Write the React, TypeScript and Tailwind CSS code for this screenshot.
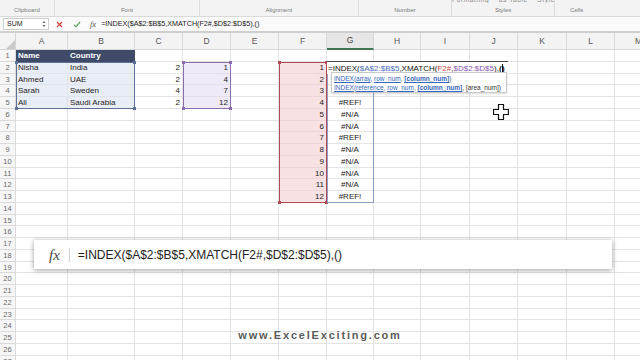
import React from 'react';

const cols = ['A', 'B', 'C', 'D', 'E', 'F', 'G', 'H', 'I', 'J', 'K', 'L', 'M'];

type Kind = 'hdr' | 'blue' | 'num' | 'purple' | 'pink' | 'err';
const data: Record<string, { t: string; k: Kind }> = {
  A1: { t: 'Name', k: 'hdr' },
  B1: { t: 'Country', k: 'hdr' },
  A2: { t: 'Nisha', k: 'blue' },
  B2: { t: 'India', k: 'blue' },
  A3: { t: 'Ahmed', k: 'blue' },
  B3: { t: 'UAE', k: 'blue' },
  A4: { t: 'Sarah', k: 'blue' },
  B4: { t: 'Sweden', k: 'blue' },
  A5: { t: 'Ali', k: 'blue' },
  B5: { t: 'Saudi Arabia', k: 'blue' },
  C2: { t: '2', k: 'num' },
  C3: { t: '2', k: 'num' },
  C4: { t: '4', k: 'num' },
  C5: { t: '2', k: 'num' },
  D2: { t: '1', k: 'purple' },
  D3: { t: '4', k: 'purple' },
  D4: { t: '7', k: 'purple' },
  D5: { t: '12', k: 'purple' },
};
for (let i = 1; i <= 12; i++) data['F' + (i + 1)] = { t: String(i), k: 'pink' };
const gVals = ['', '', '#N/A', '#REF!', '#N/A', '#N/A', '#REF!', '#N/A', '#N/A', '#N/A', '#N/A', '#REF!'];
gVals.forEach((v, i) => {
  if (v) data['G' + (i + 2)] = { t: v, k: 'err' };
});

function cellClass(k?: Kind) {
  const base =
    'h-[11.75px] border-r border-b text-[8px] leading-[11px] px-[2px] whitespace-nowrap overflow-visible text-[#1c1c1c]';
  switch (k) {
    case 'hdr':
      return base + ' bg-[#3e4a68] border-[#3e4a68] text-white font-bold';
    case 'blue':
      return base + ' bg-[#e9edf6] border-[#dfe3ec]';
    case 'purple':
      return base + ' bg-[#f0eaf6] border-[#e4dfea] text-right';
    case 'pink':
      return base + ' bg-[#f8e1e3] border-[#ecd6d8] text-right';
    case 'num':
      return base + ' border-[#e3e3e3] text-right';
    case 'err':
      return base + ' border-[#e3e3e3] text-center';
    default:
      return base + ' border-[#e3e3e3]';
  }
}

function Handles({ c }: { c: string }) {
  return (
    <>
      <div className={'absolute -left-[2px] -top-[2px] w-[3px] h-[3px] ' + c} />
      <div className={'absolute -right-[2px] -top-[2px] w-[3px] h-[3px] ' + c} />
      <div className={'absolute -left-[2px] -bottom-[2px] w-[3px] h-[3px] ' + c} />
      <div className={'absolute -right-[2px] -bottom-[2px] w-[3px] h-[3px] ' + c} />
    </>
  );
}

function Ribbon() {
  const label = 'text-[6px] text-[#7a7a7a] leading-[8px] text-center pb-[2px]';
  return (
    <div className="h-[17px] bg-[#f3f3f3] border-b border-[#dadada] flex overflow-hidden">
      <div className="w-[58px] border-r border-[#dcdcdc] flex flex-col justify-end">
        <div className={label}>Clipboard</div>
      </div>
      <div className="w-[154px] border-r border-[#dcdcdc] flex flex-col justify-end">
        <div className={label}>Font</div>
      </div>
      <div className="w-[168px] border-r border-[#dcdcdc] flex flex-col justify-end">
        <div className={label}>Alignment</div>
      </div>
      <div className="w-[99px] border-r border-[#dcdcdc] flex flex-col justify-end">
        <div className={label}>Number</div>
      </div>
      <div className="w-[103px] border-r border-[#dcdcdc] flex flex-col justify-between">
        <div className="h-[3px] overflow-hidden">
          <div className="-mt-[4px] text-[6.5px] leading-[7px] tracking-[0.6px] text-[#8a8a8a] text-center whitespace-nowrap">
            Formatting&nbsp;&nbsp;&nbsp;&nbsp;as Table&nbsp;&nbsp;&nbsp;&nbsp;Styles
          </div>
        </div>
        <div className={label}>Styles</div>
      </div>
      <div className="w-[90px] flex flex-col justify-end">
        <div className={label + ' pr-[42px]'}>Cells</div>
      </div>
    </div>
  );
}

function FormulaBar() {
  return (
    <div className="h-[14px] bg-[#fafafa] flex items-center">
      <div className="ml-[3px] w-[46px] h-[12px] bg-white border border-[#cdcdcd] flex items-center justify-between pl-[3px] pr-[2px]">
        <span className="text-[7px] leading-[8px] text-[#222]">SUM</span>
        <svg width="4" height="8" viewBox="0 0 4 8">
          <path d="M0.5 3 L2 1 L3.5 3 Z" fill="#666" />
          <path d="M0.5 5 L2 7 L3.5 5 Z" fill="#666" />
        </svg>
      </div>
      <div className="ml-[7px] w-[7px] h-[7px]">
        <svg width="7" height="7" viewBox="0 0 7 7">
          <path d="M1 1 L6 6 M6 1 L1 6" stroke="#d9413a" strokeWidth="1.2" />
        </svg>
      </div>
      <div className="ml-[10px] w-[8px] h-[7px]">
        <svg width="8" height="7" viewBox="0 0 8 7">
          <path d="M1 3.8 L3 5.8 L7 1" stroke="#58a55c" strokeWidth="1.2" fill="none" />
        </svg>
      </div>
      <span className="ml-[9px] text-[8.5px] leading-[10px] italic text-[#555] font-['Liberation_Serif',serif]">fx</span>
      <span className="ml-[5px] text-[7.2px] leading-[10px] text-[#222] whitespace-nowrap">
        =INDEX($A$2:$B$5,XMATCH(F2#,$D$2:$D$5),()
      </span>
    </div>
  );
}

function Grid() {
  const rows = Array.from({ length: 27 }, (_, i) => i + 1);
  return (
    <div className="relative">
      <div className="grid grid-cols-[16px_52px_67px_48px_48px_48px_48px_47px_47px_49px_48px_49px_48px_48px]">
        <div className="h-[17px] bg-[#f3f3f3] border-r border-b border-[#d6d6d6] flex items-end justify-end">
          <svg width="9" height="9" viewBox="0 0 9 9">
            <path d="M9 0 L9 9 L0 9 Z" fill="#c9c9c9" />
          </svg>
        </div>
        {cols.map((c) => (
          <div
            key={c}
            className={
              c === 'G'
                ? 'h-[17px] bg-[#e6e6e6] border-r border-[#d6d6d6] border-b-[2px] border-b-[#3d7550] flex items-center justify-center text-[8.5px] text-[#444]'
                : 'h-[17px] bg-[#f3f3f3] border-r border-b border-[#d9d9d9] flex items-center justify-center text-[8.5px] text-[#555]'
            }
          >
            {c}
          </div>
        ))}
        {rows.map((r) => (
          <React.Fragment key={r}>
            <div className="h-[11.75px] bg-[#f6f6f6] border-r border-b border-[#dadada] text-[7.5px] leading-[11px] text-center text-[#6a6a6a]">
              {r}
            </div>
            {cols.map((c) => {
              const d = data[c + r];
              return (
                <div key={c} className={cellClass(d?.k)}>
                  {d?.t}
                </div>
              );
            })}
          </React.Fragment>
        ))}
      </div>

      {/* Range highlights */}
      <div className="absolute left-[16px] top-[28.75px] w-[119px] h-[47px] border border-[#5e6f98]">
        <Handles c="bg-[#5e6f98]" />
      </div>
      <div className="absolute left-[183px] top-[28.75px] w-[48px] h-[47px] border border-[#8a6dab]">
        <Handles c="bg-[#8a6dab]" />
      </div>
      <div className="absolute left-[279px] top-[28.75px] w-[48px] h-[141px] border border-[#b04c57]">
        <Handles c="bg-[#b04c57]" />
      </div>
      <div className="absolute left-[327px] top-[28.75px] w-[47px] h-[141px] border border-[#8ea0c4]" />

      {/* Edit cell G2 */}
      <div className="absolute left-[327px] top-[28.25px] h-[12.5px] bg-white border-t border-[#4a4a4a] pl-[1px] pr-[3px] flex items-center whitespace-nowrap text-[8px] leading-[11px] text-[#111]">
        <span>=INDEX(</span>
        <span className="text-[#4a6fb8]">$A$2:$B$5</span>
        <span>,XMATCH(</span>
        <span className="text-[#c0413e]">F2#</span>
        <span>,</span>
        <span className="text-[#8a5aae]">$D$2:$D$5</span>
        <span>),</span>
        <span className="font-bold">(</span>
        <span className="inline-block w-[0.5px] h-[8px] bg-black" />
        <span className="font-bold">)</span>
      </div>

      {/* Tooltip */}
      <div className="absolute left-[331px] top-[39px] w-[176px] h-[21px] bg-white border border-[#c9c9c9] shadow-[0_1px_2px_rgba(0,0,0,0.15)] px-[2px] py-[1px] text-[6.5px] leading-[9px] whitespace-nowrap">
        <div className="text-[#3465b8]">
          <span className="underline">INDEX</span>(<span className="underline">array</span>,{' '}
          <span className="underline">row_num</span>,{' '}
          <span className="underline font-bold">[column_num]</span>)
        </div>
        <div className="text-[#3465b8]">
          <span className="underline">INDEX</span>(<span className="underline">reference</span>,{' '}
          <span className="underline">row_num</span>,{' '}
          <span className="underline font-bold">[column_num]</span>
          <span className="text-[#333]">, [area_num])</span>
        </div>
      </div>

      {/* Cursor */}
      <div className="absolute left-[493px] top-[71px]">
        <svg width="16" height="16" viewBox="0 0 16 16">
          <path
            d="M5.5 0.5 H10.5 V5.5 H15.5 V10.5 H10.5 V15.5 H5.5 V10.5 H0.5 V5.5 H5.5 Z"
            fill="#fff"
            stroke="#111"
            strokeWidth="1.2"
          />
        </svg>
      </div>
    </div>
  );
}

export default function App() {
  return (
    <div className="relative w-[640px] h-[360px] overflow-hidden bg-white font-['Liberation_Sans',Arial,sans-serif]">
      <Ribbon />
      <FormulaBar />
      <div className="h-[2px] bg-[#cfcfcf]" />
      <Grid />

      {/* Magnified formula bar */}
      <div className="absolute left-[34px] top-[240px] w-[578px] h-[29px] bg-white shadow-[0_1px_5px_rgba(0,0,0,0.4)] flex items-center">
        <span className="ml-[15px] text-[15px] leading-[18px] italic text-[#444] font-['Liberation_Serif',serif]">fx</span>
        <div className="ml-[9px] w-[1px] h-[14px] bg-[#d0d0d0]" />
        <span className="ml-[8px] text-[12px] leading-[16px] text-[#222] whitespace-nowrap">
          =INDEX($A$2:$B$5,XMATCH(F2#,$D$2:$D$5),()
        </span>
      </div>

      {/* Watermark */}
      <div className="absolute left-0 right-0 top-[328px] text-center text-[11px] leading-[14px] font-bold tracking-[1.8px] text-[#5a5a5a]">
        www.ExcelExciting.com
      </div>
    </div>
  );
}
